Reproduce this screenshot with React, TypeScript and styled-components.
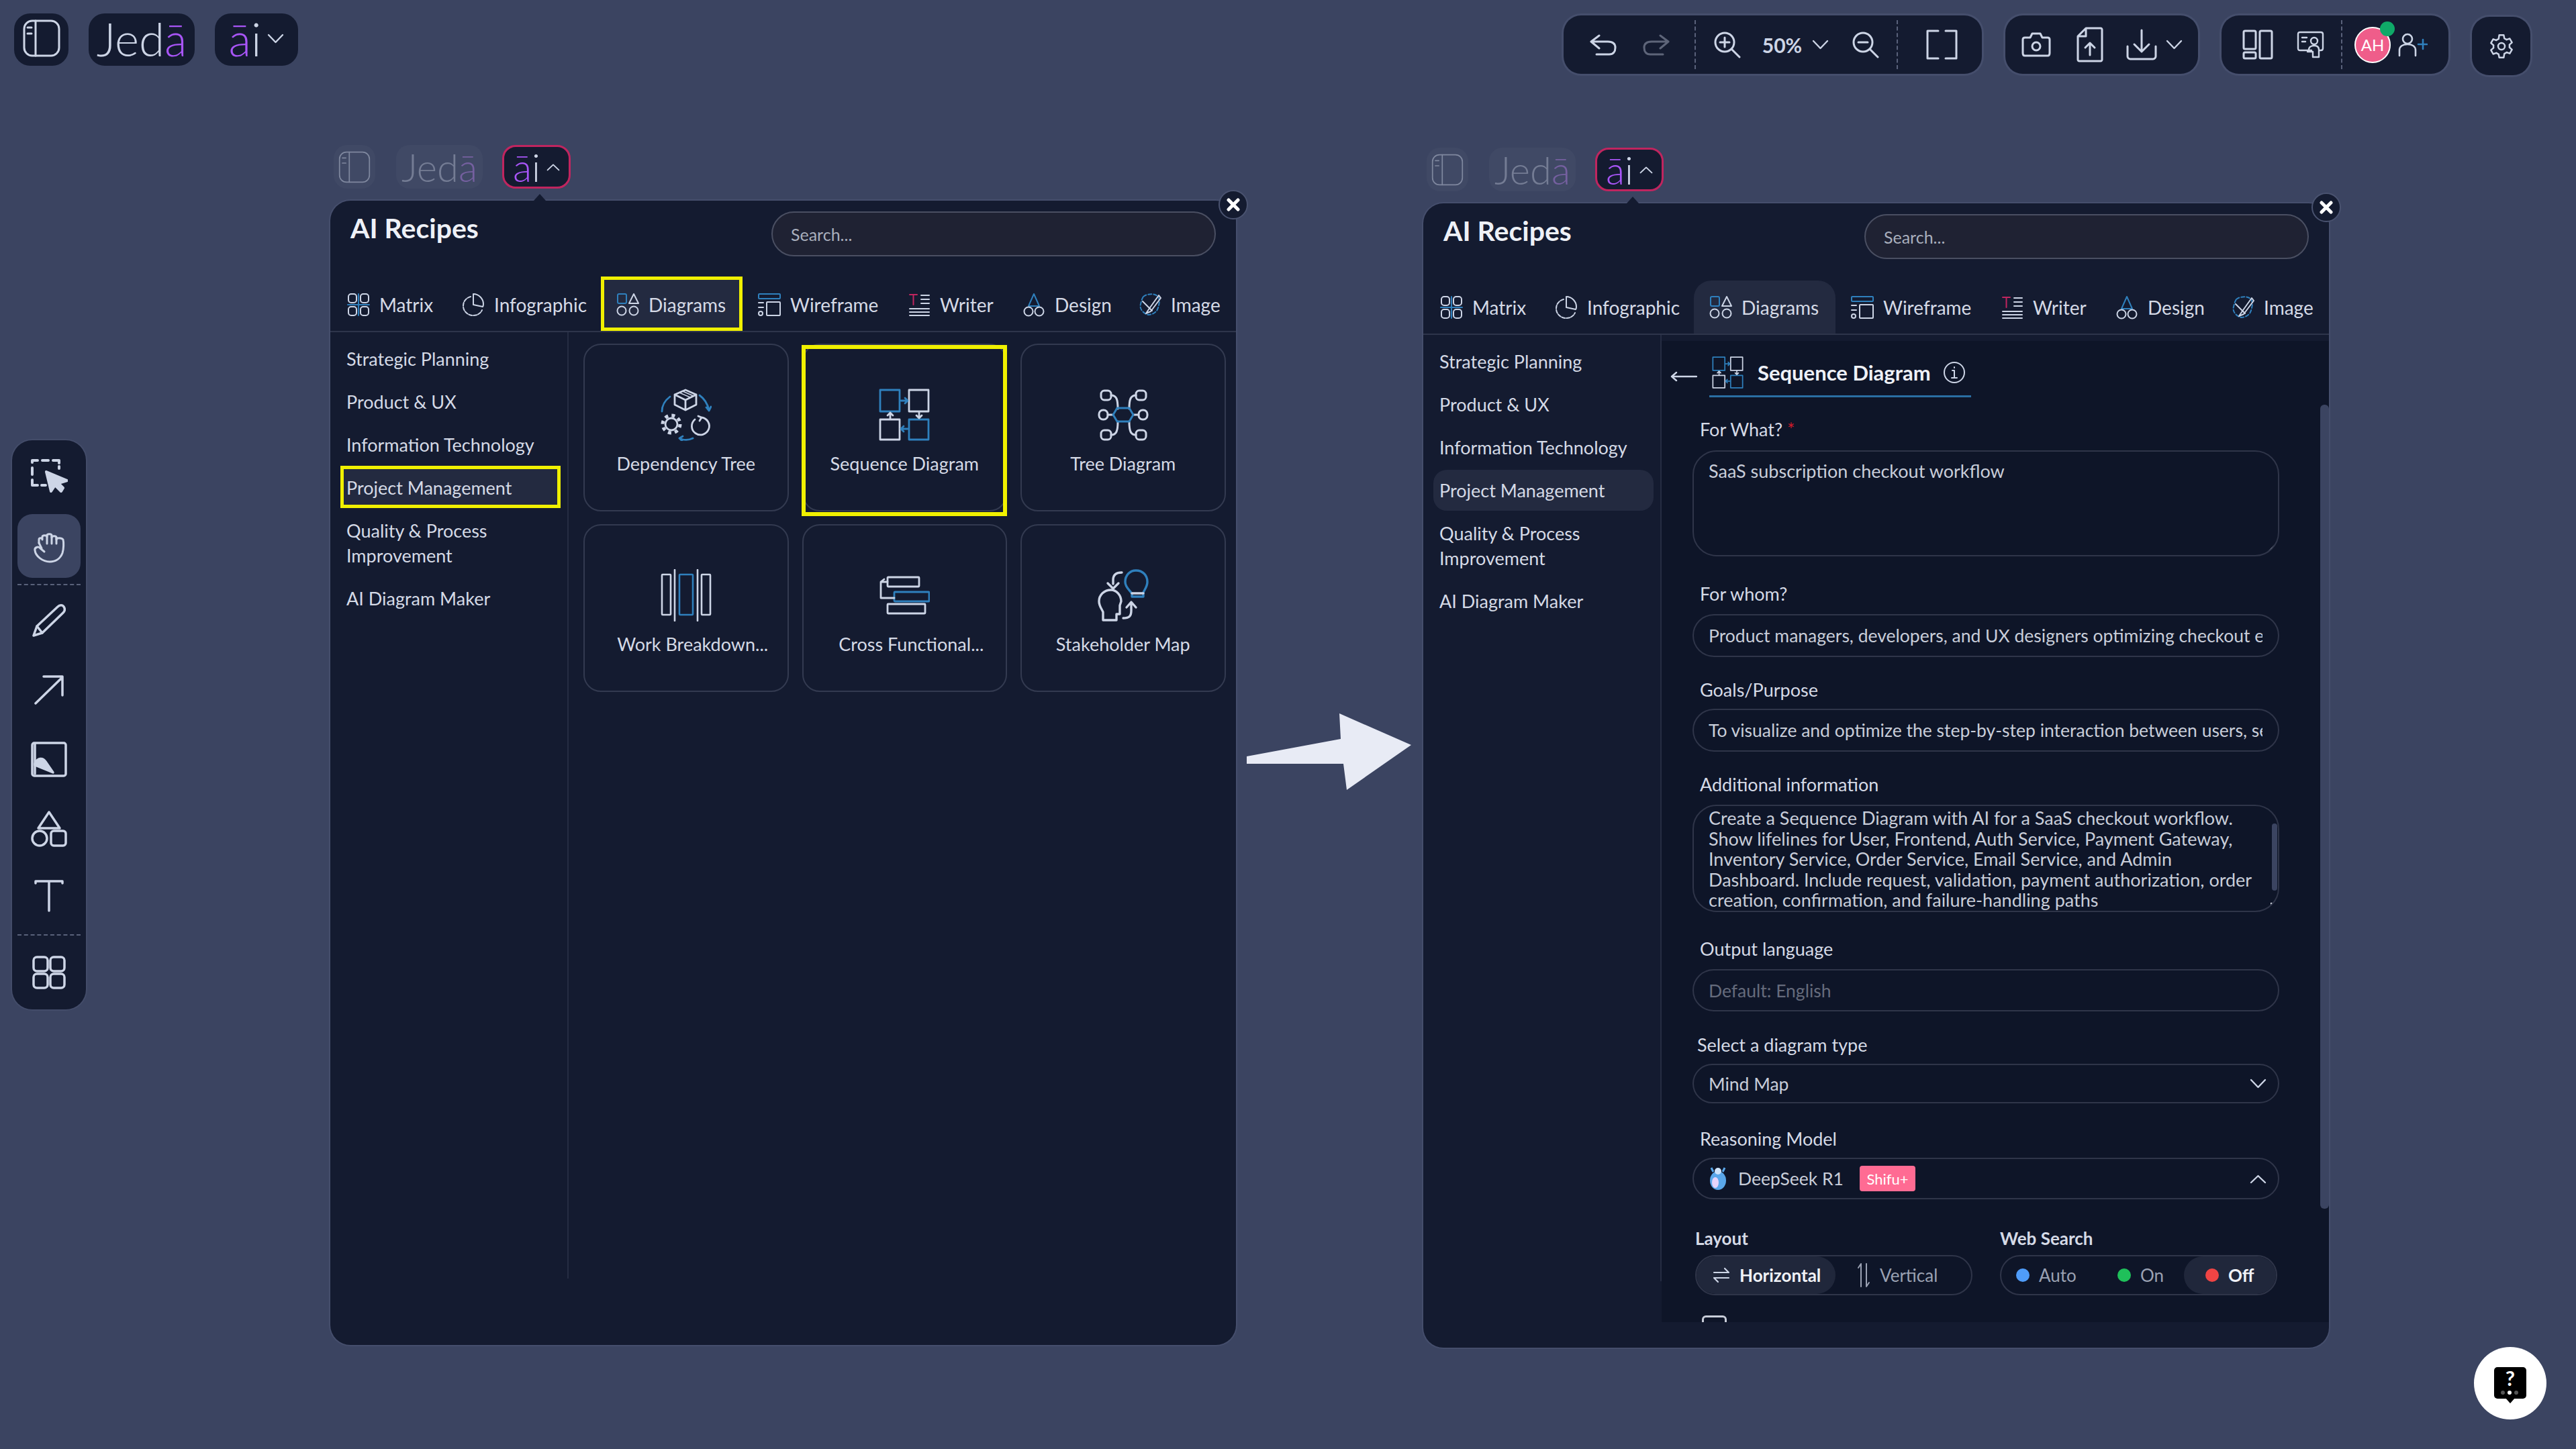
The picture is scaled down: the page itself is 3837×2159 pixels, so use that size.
import { FC, ReactNode } from 'react';
import styled, { createGlobalStyle } from 'styled-components';

const GlobalStyle = createGlobalStyle`
	html, body {
		margin: 0;
		padding: 0;
		background: #3b4461;
	}
	* {
		box-sizing: border-box;
	}
`;

const INK = '#cdd5e6';
const BLUE = '#2f80bd';
const DARK = '#141b30';

const Canvas = styled.div`
	position: relative;
	width: 3837px;
	height: 2159px;
	overflow: hidden;
	background: #3b4461;
	font-family: 'Lato', 'Open Sans', sans-serif;
	color: ${INK};
`;

/* ---------- top bar ---------- */

const TopBar = styled.div`
	display: flex;
	justify-content: space-between;
	align-items: flex-start;
	padding: 20px 68px 0 21px;
`;

const Cluster = styled.div<{ $gap: number }>`
	display: flex;
	gap: ${(p) => p.$gap}px;
`;

const LogoBox = styled.div<{ $w: number }>`
	width: ${(p) => p.$w}px;
	height: 78px;
	display: flex;
	align-items: center;
	justify-content: center;
	background: ${DARK};
	border-radius: 24px;
	font-size: 69px;
	font-weight: 300;
	line-height: 1;
	padding-bottom: 4px;
`;

const Purple = styled.span`
	color: #a855f7;
`;

const Caret = styled.span`
	display: flex;
	margin-left: 9px;
`;

const BarGroup = styled.div<{ $w: number; $top?: number }>`
	width: ${(p) => p.$w}px;
	height: 87px;
	margin-top: ${(p) => p.$top ?? 3}px;
	display: flex;
	align-items: center;
	background: ${DARK};
	border-radius: 26px;
	box-shadow: 0 0 0 3px #454e6c;
`;

const Slot = styled.div<{ $w: number; $dim?: boolean }>`
	width: ${(p) => p.$w}px;
	height: 100%;
	flex: none;
	display: flex;
	align-items: center;
	justify-content: center;
	opacity: ${(p) => (p.$dim ? 0.4 : 1)};

	svg {
		flex: none;
	}
`;

const DashedRule = styled.div`
	width: 0;
	height: 73px;
	flex: none;
	border-left: 2px dashed #59617a;
`;

const Percent = styled.span`
	font-size: 30px;
	font-weight: 700;
`;

const Avatar = styled.div`
	position: relative;
	width: 54px;
	height: 54px;
	display: flex;
	align-items: center;
	justify-content: center;
	background: #ef5d8a;
	border: 2px solid #fff;
	border-radius: 50%;
	color: #fff;
	font-size: 24px;

	&::after {
		content: '';
		position: absolute;
		top: -10px;
		right: -8px;
		width: 22px;
		height: 22px;
		border-radius: 50%;
		background: #0fa968;
	}
`;

/* ---------- left tools ---------- */

const ToolRail = styled.div`
	position: absolute;
	left: 18px;
	top: 656px;
	width: 110px;
	height: 848px;
	padding-top: 8px;
	display: flex;
	flex-direction: column;
	align-items: center;
	background: ${DARK};
	border-radius: 30px;
	box-shadow: 0 0 0 2px #434c69;
`;

const ToolSlot = styled.div<{ $h: number; $active?: boolean }>`
	width: 94px;
	height: ${(p) => p.$h}px;
	flex: none;
	display: flex;
	align-items: center;
	justify-content: center;
	border-radius: 22px;
	background: ${(p) => (p.$active ? '#3b4461' : 'transparent')};
	margin-top: ${(p) => (p.$active ? 10 : 0)}px;
`;

const ToolRule = styled.div<{ $mt: number }>`
	width: 94px;
	height: 0;
	flex: none;
	margin-top: ${(p) => p.$mt}px;
	border-top: 2px dashed #59617a;
`;

/* ---------- panel window ---------- */

const PanelWindow = styled.div<{ $x: number; $y: number }>`
	position: absolute;
	left: ${(p) => p.$x}px;
	top: ${(p) => p.$y}px;
	width: 1349px;
`;

const MiniBar = styled.div`
	display: flex;
	height: 65px;
	margin-bottom: 18px;
	padding-left: 5px;
`;

const MiniBox = styled.div<{ $w: number; $mr: number; $on?: boolean }>`
	width: ${(p) => p.$w}px;
	margin-right: ${(p) => p.$mr}px;
	display: flex;
	align-items: center;
	justify-content: center;
	border-radius: 20px;
	font-size: 58px;
	font-weight: 300;
	line-height: 1;
	background: ${(p) => (p.$on ? DARK : '#404965')};
	border: ${(p) => (p.$on ? '3px solid #c0255f' : 'none')};
	color: ${(p) => (p.$on ? INK : '#747c94')};

	${Purple} {
		color: ${(p) => (p.$on ? '#a855f7' : '#7560a0')};
	}

	> svg {
		opacity: 0.45;
	}
`;

const Panel = styled.div`
	position: relative;
	height: 1705px;
	display: flex;
	flex-direction: column;
	background: ${DARK};
	border-radius: 30px;
	box-shadow: 0 0 0 2px #454e6c;

	&::before {
		content: '';
		position: absolute;
		left: 303px;
		top: -10px;
		border-left: 9px solid transparent;
		border-right: 9px solid transparent;
		border-bottom: 10px solid ${DARK};
	}
`;

const CloseButton = styled.button`
	position: absolute;
	right: -18px;
	top: -16px;
	width: 44px;
	height: 44px;
	padding: 0;
	display: flex;
	align-items: center;
	justify-content: center;
	border-radius: 50%;
	border: 2px solid #4a5370;
	background: ${DARK};
	z-index: 2;
`;

const PanelHead = styled.div`
	height: 115px;
	flex: none;
	display: flex;
	align-items: flex-start;
	padding: 16px 30px 0 30px;
`;

const PanelTitle = styled.h2`
	flex: 1;
	margin: 2px 0 0;
	font-size: 41px;
	line-height: 46px;
	font-weight: 700;
	color: #eef1f7;
`;

const Search = styled.div`
	width: 662px;
	height: 67px;
	display: flex;
	align-items: center;
	padding-left: 27px;
	background: #1f2233;
	border: 2px solid #4a4f62;
	border-radius: 34px;
	font-size: 25px;
	color: #a9afbd;
`;

const TabRow = styled.div`
	height: 81px;
	flex: none;
	display: grid;
	grid-template-columns: 171px 230px 211px 223px 171px 173px 1fr;
	padding-left: 2px;
	border-bottom: 2px solid #2e354b;
`;

const YellowMark = `
	&::after {
		content: '';
		position: absolute;
		inset: -2px 0 0 0;
		border: 5px solid #f0f000;
		pointer-events: none;
	}
`;

const Tab = styled.div<{ $on?: 'mark' | 'fill' }>`
	position: relative;
	display: flex;
	align-items: center;
	gap: 14px;
	padding-left: 23px;
	font-size: 28px;
	color: #d5dae6;
	background: ${(p) => (p.$on ? '#232a40' : 'transparent')};
	border-radius: ${(p) => (p.$on === 'fill' ? '26px 26px 0 0' : '0')};

	svg {
		flex: none;
	}

	${(p) => p.$on === 'mark' && YellowMark}
`;

const PanelBody = styled.div`
	flex: 1;
	min-height: 0;
	display: flex;
`;

const Sidebar = styled.div`
	width: 355px;
	height: 1410px;
	flex: none;
	display: flex;
	flex-direction: column;
	gap: 3px;
	padding: 9px 10px 0 15px;
	border-right: 2px solid #252c42;
`;

const SideItem = styled.div<{ $on?: 'mark' | 'fill' }>`
	position: relative;
	padding: 12px 9px;
	font-size: 27px;
	line-height: 37px;
	color: #d5dae6;
	border-radius: ${(p) => (p.$on === 'fill' ? '20px' : '0')};
	background: ${(p) => (p.$on ? '#232a40' : 'transparent')};

	${(p) => p.$on === 'mark' && YellowMark}
`;

const CardGrid = styled.div`
	display: grid;
	grid-template-columns: repeat(3, 305.5px);
	grid-auto-rows: 250px;
	column-gap: 20px;
	row-gap: 19px;
	padding: 17px 0 0 22px;
`;

const Card = styled.div<{ $marked?: boolean; $cut?: boolean }>`
	position: relative;
	display: flex;
	flex-direction: column;
	align-items: center;
	padding-top: 65px;
	border: 2px solid #333a50;
	border-radius: 26px;

	${(p) =>
		p.$marked &&
		`&::after {
			content: '';
			position: absolute;
			inset: 0 -2px -9px -3px;
			border: 6px solid #f0f000;
		}`}

	span {
		margin-top: 19px;
		padding-left: ${(p) => (p.$cut ? 20 : 0)}px;
		font-size: 27px;
		line-height: 30px;
		color: #d5dae6;
		white-space: nowrap;
	}
`;

const ArtBox = styled.div`
	height: 78px;
	display: flex;
	align-items: center;
`;

/* ---------- recipe form ---------- */

const FormPane = styled.div`
	position: relative;
	flex: 1;
	height: 1462px;
	margin-top: 9px;
	padding: 22px 0 0 0;
	background: #0e1528;
	overflow: hidden;
`;

const FormThumb = styled.div`
	position: absolute;
	right: 0;
	top: 95px;
	width: 13px;
	height: 1198px;
	border-radius: 6px;
	background: #3b4461;
`;

const FormHead = styled.div`
	display: flex;
	align-items: center;
	padding-left: 13px;
`;

const FormTitle = styled.div`
	width: 390px;
	height: 62px;
	margin-left: 15px;
	display: flex;
	align-items: center;
	padding: 0 0 10px 3px;
	border-bottom: 3px solid #2a6ea3;

	strong {
		margin: 0 18px 0 20px;
		font-size: 31px;
		font-weight: 700;
		color: #eef1f7;
		white-space: nowrap;
	}
`;

const Field = styled.div<{ $top: number; $indent?: number }>`
	margin: ${(p) => p.$top}px 0 0 46px;
	width: 874px;

	label {
		display: block;
		margin-left: ${(p) => p.$indent ?? 11}px;
		transform: translateY(-2px);
		font-size: 27px;
		line-height: 30px;
		color: #d5dae6;
	}

	em {
		color: #d11a2a;
		font-style: normal;
	}
`;

const FieldBox = styled.div<{ $h: number; $gap: number; $r?: number; $muted?: boolean }>`
	position: relative;
	height: ${(p) => p.$h}px;
	margin-top: ${(p) => p.$gap}px;
	display: flex;
	align-items: center;
	gap: 16px;
	padding: 0 23px 0 22px;
	border: 2px solid #2f3549;
	border-radius: ${(p) => p.$r ?? 32}px;
	font-size: 26.5px;
	color: ${(p) => (p.$muted ? '#656b7c' : '#c8cdd9')};
	white-space: nowrap;
	overflow: hidden;
`;

const FieldText = styled.div<{ $top?: number }>`
	flex: 1;
	overflow: hidden;
	white-space: pre-line;
	line-height: 30.5px;
	align-self: flex-start;
	font-size: 27px;
	margin-top: ${(p) => p.$top ?? 0}px;
`;

const ClipLine = styled.div`
	flex: 1;
	overflow: hidden;
	white-space: nowrap;
`;

const Grip = styled.div`
	position: absolute;
	right: 3px;
	bottom: 3px;
	width: 13px;
	height: 13px;
	display: flex;
`;

const AreaThumb = styled.div`
	position: absolute;
	right: 1px;
	top: 26px;
	width: 8px;
	height: 100px;
	border-radius: 4px;
	background: #3b4461;
`;

const AreaDot = styled.div`
	position: absolute;
	right: 2px;
	bottom: 3px;
	width: 9px;
	height: 9px;
	background: #e4e8f0;
`;

const ShifuBadge = styled.span`
	width: 83px;
	height: 38px;
	margin-left: 8px;
	display: flex;
	align-items: center;
	justify-content: center;
	border-radius: 4px;
	background: #ff6b93;
	color: #fff;
	font-size: 22px;
`;

const Pushed = styled.div`
	margin: 0 -6px 0 auto;
	display: flex;
`;

const SplitRow = styled.div`
	display: flex;
	gap: 41px;
	margin: 45px 0 0 50px;
`;

const SplitCol = styled.div`
	width: 413px;

	label {
		display: block;
		transform: translateY(-2px);
		font-size: 26px;
		line-height: 30px;
		font-weight: 700;
		color: #d5dae6;
	}
`;

const Toggle = styled.div`
	height: 60px;
	margin-top: 8px;
	display: flex;
	border: 2px solid #2f3549;
	border-radius: 30px;
	overflow: hidden;
`;

const ToggleOption = styled.div<{ $w: number; $on?: boolean; $pad: number }>`
	width: ${(p) => p.$w}px;
	display: flex;
	align-items: center;
	gap: 14px;
	padding-left: ${(p) => p.$pad}px;
	font-size: 26px;
	font-weight: ${(p) => (p.$on ? 700 : 400)};
	color: ${(p) => (p.$on ? '#f0f2f7' : '#9aa1b2')};
	background: ${(p) => (p.$on ? '#20273b' : 'transparent')};
	border-radius: 30px;
`;

const Dot = styled.i<{ $c: string }>`
	width: 20px;
	height: 20px;
	flex: none;
	border-radius: 50%;
	background: ${(p) => p.$c};
`;

const Peek = styled.div`
	width: 37px;
	height: 30px;
	margin: 30px 0 0 60px;
	border: 3px solid #c8cdd9;
	border-radius: 6px;
`;

const ArrowMark = styled.svg`
	position: absolute;
	left: 1857px;
	top: 1063px;
`;

const HelpButton = styled.div`
	position: absolute;
	left: 3685px;
	top: 2007px;
	width: 108px;
	height: 108px;
	display: flex;
	align-items: center;
	justify-content: center;
	border-radius: 50%;
	background: #fff;
`;

const HelpBubble = styled.div`
	position: relative;
	width: 48px;
	height: 47px;
	margin-top: -2px;
	padding-top: 1px;
	text-align: center;
	background: #000;
	border-radius: 5px;
	color: #fff;
	font-size: 31px;
	line-height: 30px;
	font-weight: 700;

	&::after {
		content: '';
		position: absolute;
		left: 17px;
		bottom: -7px;
		border-left: 7px solid transparent;
		border-right: 7px solid transparent;
		border-top: 8px solid #000;
	}
`;

const HelpDots = styled.div`
	position: absolute;
	left: 10px;
	bottom: 6px;
	display: flex;
	gap: 4px;

	i {
		width: 6px;
		height: 6px;
		border-radius: 50%;
		background: #555;
	}

	i:nth-child(2) {
		background: #fff;
	}
`;

/* ---------- icons ---------- */

interface IconProps {
	w: number;
	h: number;
	box?: string;
	sw?: number;
	children: ReactNode;
}

const Icon: FC<IconProps> = ({ w, h, box, sw = 3, children }) => (
	<svg
		width={w}
		height={h}
		viewBox={box ?? `0 0 ${w} ${h}`}
		fill="none"
		stroke={INK}
		strokeWidth={sw}
		strokeLinecap="round"
		strokeLinejoin="round"
	>
		{children}
	</svg>
);

const PanelIcon: FC<{ s: number; sw?: number }> = ({ s, sw = 3 }) => (
	<Icon w={s} h={s} box="0 0 56 56" sw={sw}>
		<rect x="2" y="2" width="52" height="52" rx="12" />
		<path d="M19 2v52M7 12h6M7 21h6" />
	</Icon>
);

const Chevron: FC<{ up?: boolean; s?: number }> = ({ up, s = 25 }) => (
	<Icon w={s} h={s * 0.6} box="0 0 25 15" sw={2.4}>
		<path d={up ? 'M2 13 12.5 3 23 13' : 'M2 2l10.5 11L23 2'} />
	</Icon>
);

const Undo = () => (
	<Icon w={40} h={32}>
		<path d="M14 2 2 11l12 10M3 11h24c7 0 11 3 11 9s-3 10-9 10H10" />
	</Icon>
);

const Redo = () => (
	<Icon w={40} h={32}>
		<path d="M26 2l12 9-12 10M37 11H13C6 11 2 14 2 20s3 10 9 10h19" />
	</Icon>
);

const Magnifier: FC<{ plus?: boolean }> = ({ plus }) => (
	<Icon w={40} h={40}>
		<circle cx="16" cy="16" r="14" />
		<path d="M26 26l12 12M9 16h14" />
		{plus && <path d="M16 9v14" />}
	</Icon>
);

const FrameIcon = () => (
	<Icon w={47} h={45}>
		<path d="M18 2H2v41h16M29 2h16v41H29" />
	</Icon>
);

const CameraIcon = () => (
	<Icon w={44} h={37}>
		<path d="M5 8h8l3-6h12l3 6h8c2 0 3 1 3 3v20c0 2-1 4-3 4H5c-2 0-3-2-3-4V11c0-2 1-3 3-3Z" />
		<circle cx="22" cy="21" r="6" />
	</Icon>
);

const FileIcon = () => (
	<Icon w={40} h={53}>
		<path d="M14 2h22c1 0 2 1 2 2v45c0 1-1 2-2 2H4c-1 0-2-1-2-2V14ZM14 2v12H2M20 42V24M13 31l7-7 7 7" />
	</Icon>
);

const DownloadIcon = () => (
	<Icon w={46} h={47}>
		<path d="M23 2v31M12 23l11 11 11-11M2 26v15c0 2 2 4 4 4h34c2 0 4-2 4-4V26" />
	</Icon>
);

const LayoutIcon = () => (
	<Icon w={46} h={45}>
		<rect x="2" y="2" width="18" height="27" rx="2" />
		<rect x="2" y="34" width="18" height="9" rx="2" />
		<rect x="26" y="2" width="18" height="41" rx="2" />
	</Icon>
);

const PresenterIcon = () => (
	<Icon w={41} h={41} sw={2.4}>
		<path d="M22 29H5c-2 0-3-1-3-3V5c0-2 1-3 3-3h31c2 0 3 1 3 3v21c0 2-1 3-3 3h-2" />
		<path d="M8 10h7M8 16h5" />
		<circle cx="26" cy="15" r="5" />
		<path d="M18 28c0-4 4-6 8-6s7 2 7 6v11h-9V31l-8 0" />
	</Icon>
);

const UserPlus = () => (
	<Icon w={44} h={36} sw={2.6}>
		<circle cx="14" cy="9" r="7" />
		<path d="M2 34V26c0-6 5-9 12-9s12 3 12 9v8" />
		<path d="M37 10v14M30 17h13" stroke={BLUE} />
	</Icon>
);

const GearIcon = () => (
	<Icon w={40} h={40} box="0 0 24 24" sw={1.5}>
		<path d="M10 2h4l.6 3a7.500 7.500 0 0 1 2 1.100l2.800-1 2 3.500-2.300 2a7.500 7.500 0 0 1 0 2.300l2.300 2-2 3.500-2.800-1a7.500 7.500 0 0 1-2 1.100L14 22h-4l-.6-3a7.500 7.500 0 0 1-2-1.100l-2.800 1-2-3.500 2.300-2a7.500 7.500 0 0 1 0-2.300l-2.300-2 2-3.500 2.800 1a7.500 7.500 0 0 1 2-1.100Z" />
		<circle cx="12" cy="12" r="3" />
	</Icon>
);

const SelectTool = () => (
	<Icon w={56} h={54} sw={4}>
		<path d="M3 6V3h8M18 3h9M34 3h9v4M3 14v10M3 32v8h8M17 40h6" />
		<path d="M43 12v3" />
		<path d="M24 20l31 13-13 4 7 7-3 5-9-9-6 9Z" fill={INK} />
	</Icon>
);

const HandTool = () => (
	<Icon w={48} h={50}>
		<path d="M9 20v-5c0-3 5-3 5 0v-4c0-3 7-3 7 0v-2c0-3 7-3 7 0v3c0-3 7-3 7 0v3c0-3 8-3 10 0 1 4 1 14-1 20-3 8-10 13-19 13-10 0-21-8-22-17-1-4 5-7 8-3l6 5" />
		<path d="M9 20l4 8M21 10v11M28 10v11M35 12v9" />
	</Icon>
);

const PencilTool = () => (
	<Icon w={50} h={50} sw={3.5}>
		<path d="M2 48l5-14L38 5c3-3 7-3 9 0s2 6-1 9L15 44Z" />
		<path d="M7 34l8 10" />
	</Icon>
);

const ArrowTool = () => (
	<Icon w={46} h={46} sw={3.5}>
		<path d="M3 43 43 4M15 3h28v28" />
	</Icon>
);

const ImageTool = () => (
	<Icon w={54} h={53} sw={3.5}>
		<rect x="2" y="2" width="50" height="49" rx="3" />
		<path d="M6 33C10 23 18 24 22 30l11 16-27-11Z" fill={INK} />
		<path d="M6 3v45" />
	</Icon>
);

const ShapesTool = () => (
	<Icon w={54} h={55} sw={3.5}>
		<path d="M27 3l16 24H11Z" />
		<ellipse cx="13" cy="42" rx="11" ry="11" />
		<rect x="30" y="31" width="22" height="22" rx="4" />
	</Icon>
);

const TextTool = () => (
	<Icon w={44} h={49} sw={3.5}>
		<path d="M2 6V3h40v3M22 3v44" />
	</Icon>
);

const GridTool = () => (
	<Icon w={50} h={50} sw={3.5}>
		<rect x="2" y="2" width="21" height="21" rx="5" />
		<rect x="27" y="2" width="21" height="21" rx="5" />
		<rect x="2" y="27" width="21" height="21" rx="5" />
		<rect x="27" y="27" width="21" height="21" rx="5" />
	</Icon>
);

const MatrixTab = () => (
	<Icon w={34} h={36} sw={2}>
		<rect x="2" y="2" width="12" height="13" rx="4" />
		<rect x="20" y="2" width="12" height="13" rx="4" />
		<rect x="2" y="21" width="12" height="13" rx="4" />
		<rect x="20" y="21" width="12" height="13" rx="4" />
		<path d="M1 18h32M17 2v32" stroke={BLUE} />
	</Icon>
);

const InfographicTab = () => (
	<Icon w={34} h={36} sw={2}>
		<path d="M13 6C6 8 2 13 2 20c0 8 7 14 15 14 6 0 11-3 13-8" strokeDasharray="5 2" />
		<path d="M17 2v16l14 3c1-1 1-3 1-4 0-8-7-15-15-15Z" />
	</Icon>
);

const DiagramsTab = () => (
	<Icon w={34} h={36} sw={2}>
		<rect x="2" y="2" width="13" height="14" rx="2" stroke={BLUE} />
		<path d="M26 2l7 14H19Z" />
		<circle cx="8" cy="27" r="6.500" />
		<circle cx="26" cy="27" r="6.500" />
	</Icon>
);

const WireframeTab = () => (
	<Icon w={34} h={36} sw={2}>
		<rect x="1" y="2" width="32" height="7" rx="1" stroke={BLUE} />
		<rect x="13" y="14" width="20" height="20" rx="1" />
		<path d="M1 15h7M1 22h7" />
		<rect x="1" y="28" width="6" height="6" rx="3" />
	</Icon>
);

const WriterTab = () => (
	<Icon w={34} h={36} sw={2}>
		<path d="M3 3h11M8.500 3v15" stroke="#c0255f" />
		<path d="M20 4h12M20 10h12M20 16h12M3 24h29M3 29h29M3 34h29" />
	</Icon>
);

const DesignTab = () => (
	<Icon w={34} h={36} sw={2}>
		<path d="M17 2l8 18H9Z" stroke={BLUE} />
		<circle cx="9" cy="28" r="6.500" />
		<circle cx="25" cy="28" r="6.500" />
	</Icon>
);

const ImageTab = () => (
	<Icon w={34} h={36} sw={2}>
		<path d="M7 6c6-5 18-5 22 0 3 4 2 12-1 19-2 5-11 10-17 7-5-3-10-8-8-15 1-4 2-8 4-11Z" stroke={BLUE} strokeDasharray="5 3" />
		<path d="M30 4 15 25l-4 6 7-3L33 8ZM6 13l14 14" />
	</Icon>
);

const DependencyArt = () => (
	<Icon w={76} h={78} sw={2.8}>
		<path d="M37 2l16 7v15l-16 8-16-8V9ZM21 9l16 8 16-8M37 17v15" />
		<path d="M28 6l16 7M33 4l16 7" strokeWidth="1.500" />
		<path d="M14 12C6 18 2 26 2 34M58 10c7 5 12 13 14 22M68 28l4 5 3-6M28 74c6 3 14 3 20 0M33 71l-5 3 4 4" stroke={BLUE} />
		<circle cx="16" cy="53" r="9" />
		<circle cx="16" cy="53" r="13" strokeWidth="5" strokeDasharray="5 5.200" strokeLinecap="butt" />
		<path d="M61 43a13 13 0 1 1-10 3M61 43l-5-2M61 43l-3 5" />
	</Icon>
);

const SequenceArt: FC<{ w?: number; h?: number }> = ({ w = 76, h = 78 }) => (
	<Icon w={w} h={h} box="0 0 76 78" sw={2.8}>
		<rect x="2" y="2" width="29" height="32" stroke={BLUE} />
		<rect x="45" y="2" width="29" height="32" />
		<rect x="2" y="46" width="29" height="30" />
		<rect x="45" y="46" width="29" height="30" stroke={BLUE} />
		<path d="M33 18h10M39 14l4 4-4 4M43 60H33M37 56l-4 4 4 4" stroke={BLUE} />
		<path d="M17 45V36M13 40l4-4 4 4M60 35v9M56 40l4 4 4-4" />
	</Icon>
);

const TreeArt = () => (
	<Icon w={76} h={78} sw={3}>
		<rect x="5" y="3" width="15" height="14" rx="5" />
		<rect x="57" y="3" width="15" height="14" rx="5" />
		<rect x="5" y="62" width="15" height="14" rx="5" />
		<rect x="57" y="62" width="15" height="14" rx="5" />
		<rect x="2" y="32" width="13" height="14" rx="6" />
		<rect x="61" y="32" width="13" height="14" rx="6" />
		<path d="M20 10c8 0 10 6 10 20M57 10c-8 0-10 6-10 20M20 69c8 0 10-6 10-20M57 69c-8 0-10-6-10-20M15 39h8M54 39h7" />
		<path d="M29 29h18l6 10-6 10H29l-6-10Z" stroke={BLUE} />
	</Icon>
);

const WorkArt = () => (
	<Icon w={76} h={78} sw={2.6}>
		<rect x="2" y="8" width="13" height="60" rx="1" />
		<rect x="28" y="8" width="20" height="60" rx="1" stroke={BLUE} />
		<rect x="61" y="8" width="13" height="60" rx="1" />
		<path d="M21 1v76M55 1v76" />
	</Icon>
);

const CrossArt = () => (
	<Icon w={76} h={58} sw={2.8}>
		<rect x="13" y="2" width="47" height="14" rx="1" />
		<rect x="23" y="24" width="52" height="14" rx="1" stroke={BLUE} />
		<rect x="13" y="42" width="56" height="14" rx="1" />
		<path d="M13 9H3v24h20M8 5l-5 4" />
	</Icon>
);

const StakeholderArt = () => (
	<Icon w={76} h={78} sw={3.4}>
		<path d="M57 2c10 0 17 7 17 17 0 7-4 11-6 16v6H51v-4c-1-4-10-9-10-18C41 9 48 2 57 2Z" stroke={BLUE} />
		<path d="M51 36h17" stroke={INK} />
		<path d="M20 31C10 31 2 38 2 48c0 7 4 11 6 16v12h20v-9h5V54l2-6c0-9-7-17-15-17Z" />
		<path d="M36 5c-9 0-13 4-13 11v6M15 21l8 8 8-8M38 73c9 0 12-3 12-11V51M43 57l7-8 7 8" />
	</Icon>
);

const InfoIcon = () => (
	<Icon w={34} h={34} sw={2}>
		<circle cx="17" cy="17" r="15" />
		<path d="M14 14h3v11M13 25h8M17 9v1" />
	</Icon>
);

const BackArrow = () => (
	<Icon w={40} h={16} sw={2.4}>
		<path d="M2 8h37M9 2 2 8l7 6" />
	</Icon>
);

const DeepSeekLogo = () => (
	<svg width="28" height="36" viewBox="0 0 28 36">
		<ellipse cx="14" cy="21" rx="12" ry="14" fill="#5aa7ea" />
		<ellipse cx="10" cy="24" rx="5" ry="8" fill="#e6d4fb" />
		<path d="M7 8 4 2M21 8l3-6" stroke="#5aa7ea" strokeWidth="3" />
		<circle cx="14" cy="7" r="5" fill="#cfe4fb" />
	</svg>
);

const SwapIcon = () => (
	<Icon w={26} h={24} sw={2.2}>
		<path d="M2 8h22M18 2l6 6M24 16H2M8 22l-6-6" />
	</Icon>
);

const UpDownIcon = () => (
	<Icon w={20} h={38} sw={2}>
		<path d="M6 36V2L2 8M14 2v34l4-6" stroke="#9aa1b2" />
	</Icon>
);

const CloseX = () => (
	<svg width="20" height="20" viewBox="0 0 20 20" stroke="#fff" strokeWidth="5" strokeLinecap="round">
		<path d="M3 3l14 14M17 3 3 17" />
	</svg>
);

/* ---------- data ---------- */

const TABS = [
	{ label: 'Matrix', icon: <MatrixTab /> },
	{ label: 'Infographic', icon: <InfographicTab /> },
	{ label: 'Diagrams', icon: <DiagramsTab /> },
	{ label: 'Wireframe', icon: <WireframeTab /> },
	{ label: 'Writer', icon: <WriterTab /> },
	{ label: 'Design', icon: <DesignTab /> },
	{ label: 'Image', icon: <ImageTab /> },
];

const CATEGORIES = [
	'Strategic Planning',
	'Product & UX',
	'Information Technology',
	'Project Management',
	'Quality & Process\nImprovement',
	'AI Diagram Maker',
];

const CARDS = [
	{ label: 'Dependency Tree', art: <DependencyArt /> },
	{ label: 'Sequence Diagram', art: <SequenceArt />, marked: true },
	{ label: 'Tree Diagram', art: <TreeArt /> },
	{ label: 'Work Breakdown...', art: <WorkArt />, cut: true },
	{ label: 'Cross Functional...', art: <CrossArt />, cut: true },
	{ label: 'Stakeholder Map', art: <StakeholderArt /> },
];

const NOTES =
	'Create a Sequence Diagram with AI for a SaaS checkout workflow.\nShow lifelines for User, Frontend, Auth Service, Payment Gateway,\nInventory Service, Order Service, Email Service, and Admin\nDashboard. Include request, validation, payment authorization, order\ncreation, confirmation, and failure-handling paths';

/* ---------- pieces ---------- */

const RecipeWindow: FC<{ x: number; y: number; mode: 'mark' | 'fill'; children: ReactNode }> = ({
	x,
	y,
	mode,
	children,
}) => (
	<PanelWindow $x={x} $y={y}>
		<MiniBar>
			<MiniBox $w={62} $mr={31}>
				<PanelIcon s={48} sw={2} />
			</MiniBox>
			<MiniBox $w={129} $mr={29}>
				Jed<Purple>ā</Purple>
			</MiniBox>
			<MiniBox $w={102} $mr={0} $on>
				<Purple>ā</Purple>i
				<Caret>
					<Chevron up s={20} />
				</Caret>
			</MiniBox>
		</MiniBar>
		<Panel>
			<CloseButton>
				<CloseX />
			</CloseButton>
			<PanelHead>
				<PanelTitle>AI Recipes</PanelTitle>
				<Search>Search...</Search>
			</PanelHead>
			<TabRow>
				{TABS.map((t) => (
					<Tab key={t.label} $on={t.label === 'Diagrams' ? mode : undefined}>
						{t.icon}
						{t.label}
					</Tab>
				))}
			</TabRow>
			<PanelBody>
				<Sidebar>
					{CATEGORIES.map((c) => (
						<SideItem key={c} $on={c === 'Project Management' ? mode : undefined}>
							{c.split('\n').map((line) => (
								<div key={line}>{line}</div>
							))}
						</SideItem>
					))}
				</Sidebar>
				{children}
			</PanelBody>
		</Panel>
	</PanelWindow>
);

const App: FC = () => {
	return (
		<Canvas>
			<GlobalStyle />
			<TopBar>
				<Cluster $gap={30}>
					<LogoBox $w={81}>
						<PanelIcon s={56} />
					</LogoBox>
					<LogoBox $w={158}>
						Jed<Purple>ā</Purple>
					</LogoBox>
					<LogoBox $w={124}>
						<Purple>ā</Purple>i
						<Caret>
							<Chevron />
						</Caret>
					</LogoBox>
				</Cluster>
				<Cluster $gap={35}>
					<BarGroup $w={623}>
						<Slot $w={20} />
						<Slot $w={78}>
							<Undo />
						</Slot>
						<Slot $w={79} $dim>
							<Redo />
						</Slot>
						<Slot $w={18} />
						<DashedRule />
						<Slot $w={94}>
							<Magnifier plus />
						</Slot>
						<Slot $w={69}>
							<Percent>50%</Percent>
						</Slot>
						<Slot $w={44}>
							<Chevron />
						</Slot>
						<Slot $w={92}>
							<Magnifier />
						</Slot>
						<DashedRule />
						<Slot $w={130}>
							<FrameIcon />
						</Slot>
					</BarGroup>
					<BarGroup $w={287}>
						<Slot $w={92}>
							<CameraIcon />
						</Slot>
						<Slot $w={68}>
							<FileIcon />
						</Slot>
						<Slot $w={86}>
							<DownloadIcon />
						</Slot>
						<Slot $w={10}>
							<Chevron />
						</Slot>
					</BarGroup>
					<BarGroup $w={338}>
						<Slot $w={108}>
							<LayoutIcon />
						</Slot>
						<Slot $w={48}>
							<PresenterIcon />
						</Slot>
						<Slot $w={22} />
						<DashedRule />
						<Slot $w={90}>
							<Avatar>AH</Avatar>
						</Slot>
						<Slot $w={30}>
							<UserPlus />
						</Slot>
					</BarGroup>
					<BarGroup $w={87} $top={5}>
						<Slot $w={87}>
							<GearIcon />
						</Slot>
					</BarGroup>
				</Cluster>
			</TopBar>

			<ToolRail>
				<ToolSlot $h={92}>
					<SelectTool />
				</ToolSlot>
				<ToolSlot $h={95} $active>
					<HandTool />
				</ToolSlot>
				<ToolRule $mt={9} />
				<ToolSlot $h={104}>
					<PencilTool />
				</ToolSlot>
				<ToolSlot $h={104}>
					<ArrowTool />
				</ToolSlot>
				<ToolSlot $h={102}>
					<ImageTool />
				</ToolSlot>
				<ToolSlot $h={104}>
					<ShapesTool />
				</ToolSlot>
				<ToolSlot $h={96}>
					<TextTool />
				</ToolSlot>
				<ToolRule $mt={10} />
				<ToolSlot $h={110}>
					<GridTool />
				</ToolSlot>
			</ToolRail>

			<RecipeWindow x={492} y={216} mode="mark">
				<CardGrid>
					{CARDS.map((c) => (
						<Card key={c.label} $marked={c.marked} $cut={c.cut}>
							<ArtBox>{c.art}</ArtBox>
							<span>{c.label}</span>
						</Card>
					))}
				</CardGrid>
			</RecipeWindow>

			<ArrowMark width="245" height="114" viewBox="0 0 245 114">
				<path d="M0 64 140 38 138 0 245 47 149 114 144 75H0Z" fill="#e8ebf5" />
			</ArrowMark>

			<RecipeWindow x={2120} y={220} mode="fill">
				<FormPane>
					<FormThumb />
					<FormHead>
						<BackArrow />
						<Slot $w={3} />
						<FormTitle>
							<SequenceArt w={49} h={48} />
							<strong>Sequence Diagram</strong>
							<InfoIcon />
						</FormTitle>
					</FormHead>

					<Field $top={35}>
						<label>
							For What? <em>*</em>
						</label>
						<FieldBox $h={158} $gap={14} $r={36}>
							<FieldText $top={14}>SaaS subscription checkout workflow</FieldText>
							<Grip>
								<svg width="13" height="13" viewBox="0 0 13 13" stroke="#e4e8f0" strokeWidth="2">
									<path d="M1 12 12 1M7 12l5-5" />
								</svg>
							</Grip>
						</FieldBox>
					</Field>

					<Field $top={43}>
						<label>For whom?</label>
						<FieldBox $h={64} $gap={13}>
							<ClipLine>Product managers, developers, and UX designers optimizing checkout efficiency</ClipLine>
						</FieldBox>
					</Field>

					<Field $top={36}>
						<label>Goals/Purpose</label>
						<FieldBox $h={64} $gap={11}>
							<ClipLine>To visualize and optimize the step-by-step interaction between users, services</ClipLine>
						</FieldBox>
					</Field>

					<Field $top={36}>
						<label>Additional information</label>
						<FieldBox $h={160} $gap={13} $r={36}>
							<FieldText $top={3}>{NOTES}</FieldText>
							<AreaThumb />
							<AreaDot />
						</FieldBox>
					</Field>

					<Field $top={42}>
						<label>Output language</label>
						<FieldBox $h={63} $gap={13} $muted>
							Default: English
						</FieldBox>
					</Field>

					<Field $top={37} $indent={7}>
						<label>Select a diagram type</label>
						<FieldBox $h={59} $gap={11}>
							Mind Map
							<Pushed>
								<Chevron />
							</Pushed>
						</FieldBox>
					</Field>

					<Field $top={40}>
						<label>Reasoning Model</label>
						<FieldBox $h={62} $gap={11}>
							<DeepSeekLogo />
							DeepSeek R1
							<ShifuBadge>Shifu+</ShifuBadge>
							<Pushed>
								<Chevron up />
							</Pushed>
						</FieldBox>
					</Field>

					<SplitRow>
						<SplitCol>
							<label>Layout</label>
							<Toggle>
								<ToggleOption $w={207} $on $pad={24}>
									<SwapIcon />
									Horizontal
								</ToggleOption>
								<ToggleOption $w={202} $pad={32}>
									<UpDownIcon />
									Vertical
								</ToggleOption>
							</Toggle>
						</SplitCol>
						<SplitCol>
							<label>Web Search</label>
							<Toggle>
								<ToggleOption $w={146} $pad={22}>
									<Dot $c="#4f9cf9" />
									Auto
								</ToggleOption>
								<ToggleOption $w={126} $pad={27}>
									<Dot $c="#1fc05a" />
									On
								</ToggleOption>
								<ToggleOption $w={137} $on $pad={32}>
									<Dot $c="#ef4444" />
									Off
								</ToggleOption>
							</Toggle>
						</SplitCol>
					</SplitRow>
					<Peek />
				</FormPane>
			</RecipeWindow>

			<HelpButton>
				<HelpBubble>
					?
					<HelpDots>
						<i />
						<i />
						<i />
					</HelpDots>
				</HelpBubble>
			</HelpButton>
		</Canvas>
	);
};

export default App;
